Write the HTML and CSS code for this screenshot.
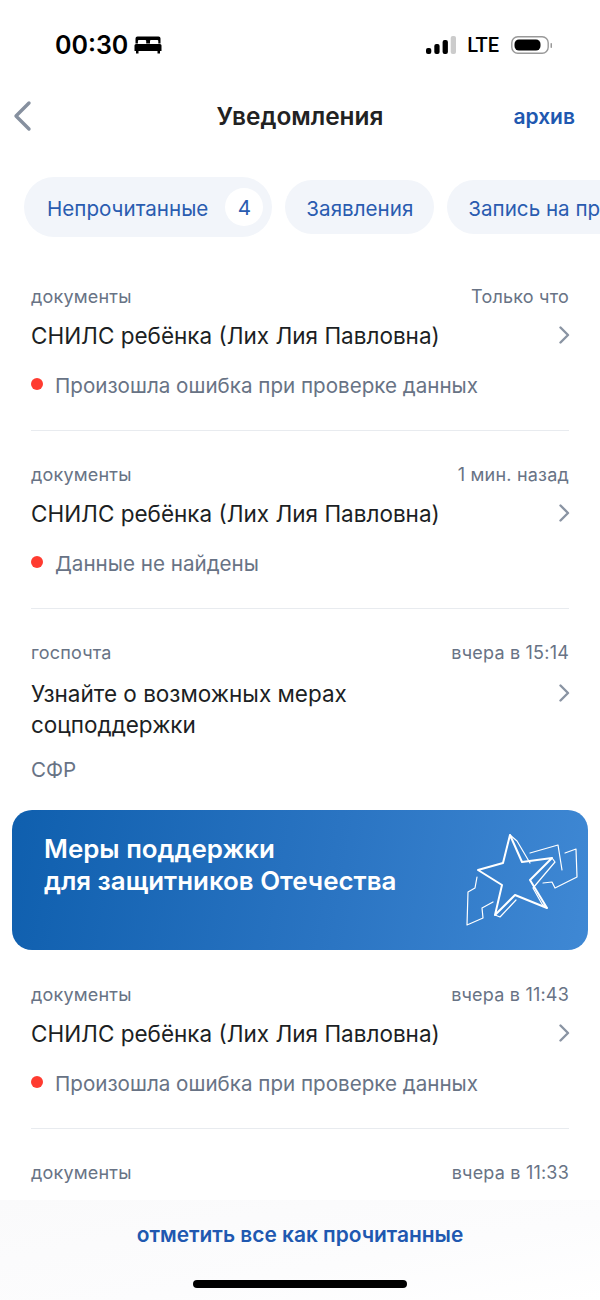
FILE: index.html
```html
<!DOCTYPE html>
<html lang="ru">
<head>
<meta charset="utf-8">
<title>Уведомления</title>
<link rel="stylesheet" href="styles.css">
</head>
<body>
<div class="page">
  <div class="status">
    <div class="status-left">
      <span class="time">00:30</span>
      <svg class="bed" width="28" height="18" viewBox="0 0 28 18"><path d="M3.500 0.500h21a2 2 0 0 1 2 2v5h-2.200v-2.500a1 1 0 0 0-1-1h-6.300a1 1 0 0 0-1 1v2.500h-3.800v-2.500a1 1 0 0 0-1-1h-6.300a1 1 0 0 0-1 1v2.500h-2.400v-5a2 2 0 0 1 2-2z" fill="#000"/><path d="M2 8h24a1.500 1.500 0 0 1 1.500 1.500v5.500h-1.500v2.500h-2.500v-2.500h-19v2.500h-2.500v-2.500h-1.500v-5.500a1.500 1.500 0 0 1 1.500-1.500z" fill="#000"/></svg>
    </div>
    <div class="status-right">
      <svg class="signal" width="30" height="20" viewBox="0 0 30 20"><rect x="0" y="13" width="5.300" height="6" rx="2" fill="#000"/><rect x="8.300" y="9" width="5.300" height="10" rx="2" fill="#000"/><rect x="16.600" y="5" width="5.300" height="14" rx="2" fill="#000"/><rect x="24.700" y="1" width="5.300" height="18" rx="2" fill="#ccc"/></svg>
      <span class="lte">LTE</span>
      <svg class="battery" width="43" height="20" viewBox="0 0 43 20"><rect x="0.800" y="1.800" width="36.400" height="16.400" rx="6" fill="none" stroke="#999" stroke-width="1.400"/><rect x="3.500" y="4.500" width="26" height="11" rx="4.500" fill="#000"/><rect x="39.500" y="8" width="1.500" height="5" rx="0.700" fill="#999"/></svg>
    </div>
  </div>

  <header class="nav">
    <svg class="back" width="20" height="32" viewBox="0 0 20 32"><path d="M16 3 3 16l13 13" fill="none" stroke="#86909f" stroke-width="3.400" stroke-linecap="round" stroke-linejoin="round"/></svg>
    <h1 class="nav-title">Уведомления</h1>
    <a class="nav-link">архив</a>
  </header>

  <div class="chips">
    <div class="chip chip-active">Непрочитанные <span class="count">4</span></div>
    <div class="chip">Заявления</div>
    <div class="chip chip-clip">Запись на приём</div>
  </div>

  <main class="list">
    <section class="item item-line">
      <div class="meta"><span>документы</span><span>Только что</span></div>
      <div class="head">
        <div class="title">СНИЛС ребёнка (Лих Лия Павловна)</div>
        <svg class="chev" width="11" height="18" viewBox="0 0 11 18"><path d="M1.500 1.500 9 9l-7.500 7.500" fill="none" stroke="#8a94a3" stroke-width="2.400" stroke-linecap="round" stroke-linejoin="round"/></svg>
      </div>
      <div class="sub"><i class="dot"></i>Произошла ошибка при проверке данных</div>
    </section>
    <section class="item item-line">
      <div class="meta"><span>документы</span><span>1 мин. назад</span></div>
      <div class="head">
        <div class="title">СНИЛС ребёнка (Лих Лия Павловна)</div>
        <svg class="chev" width="11" height="18" viewBox="0 0 11 18"><path d="M1.500 1.500 9 9l-7.500 7.500" fill="none" stroke="#8a94a3" stroke-width="2.400" stroke-linecap="round" stroke-linejoin="round"/></svg>
      </div>
      <div class="sub"><i class="dot"></i>Данные не найдены</div>
    </section>
    <section class="item item-plain">
      <div class="meta"><span>госпочта</span><span>вчера в 15:14</span></div>
      <div class="head">
        <div class="title">Узнайте о возможных мерах<br>соцподдержки</div>
        <svg class="chev" width="11" height="18" viewBox="0 0 11 18"><path d="M1.500 1.500 9 9l-7.500 7.500" fill="none" stroke="#8a94a3" stroke-width="2.400" stroke-linecap="round" stroke-linejoin="round"/></svg>
      </div>
      <div class="sub">СФР</div>
    </section>

    <div class="banner">
      <div class="banner-text">Меры поддержки<br>для защитников Отечества</div>
      <svg class="star" width="150" height="120" viewBox="0 0 150 120" fill="none" stroke="#fff" stroke-linejoin="round" stroke-linecap="round">
        <path stroke-width="2" d="M70 15 82 42 112 38 90 60 107 88 75 75 55 95 62 65 38 50 63 43z"/>
        <path stroke-width="1.200" d="M70 15 77 21 90 43M112 38 115 42 93 68 102 84 107 88M55 95 60 97 76 80M90 33 118 25 122 50M125 33 136 29 137 57 115 68 112 62 103 63M37 57 35 68 28 72 27 105 43 98 42 88 53 82"/>
      </svg>
    </div>

    <section class="item item-line">
      <div class="meta"><span>документы</span><span>вчера в 11:43</span></div>
      <div class="head">
        <div class="title">СНИЛС ребёнка (Лих Лия Павловна)</div>
        <svg class="chev" width="11" height="18" viewBox="0 0 11 18"><path d="M1.500 1.500 9 9l-7.500 7.500" fill="none" stroke="#8a94a3" stroke-width="2.400" stroke-linecap="round" stroke-linejoin="round"/></svg>
      </div>
      <div class="sub"><i class="dot"></i>Произошла ошибка при проверке данных</div>
    </section>
    <section class="item">
      <div class="meta"><span>документы</span><span>вчера в 11:33</span></div>
    </section>
  </main>

  <footer class="footer">
    <a class="footer-link">отметить все как прочитанные</a>
    <div class="home"></div>
  </footer>
</div>
</body>
</html>
```
FILE: styles.css
```css
* { box-sizing: border-box; }
html, body { margin: 0; padding: 0; background: #fff; }
body { font-family: Inter, "Liberation Sans", sans-serif; }
.page { position: relative; width: 600px; height: 1300px; overflow: hidden; background: #fff; }

.status { height: 90px; padding: 0 46px 0 55px; display: flex; justify-content: space-between; align-items: center; }
.status-left { display: flex; align-items: center; gap: 6px; }
.time { font-size: 25px; font-weight: 600; color: #000; line-height: 32px; }
.status-right { display: flex; align-items: center; gap: 12px; }
.signal { margin-right: -1px; }
.lte { font-size: 20px; font-weight: 500; color: #000; font-family: Roboto, "Liberation Sans", sans-serif; }

.nav { height: 52px; padding: 0 25px 0 13px; display: flex; align-items: center; justify-content: space-between; position: relative; }
.back { display: block; }
.nav-title { margin: 0; position: absolute; left: 0; right: 0; text-align: center; font-size: 24.400px; font-weight: 600; color: #222; line-height: 32px; }
.nav-link { font-size: 21px; font-weight: 600; color: #2058b0; }

.chips { margin-top: 35px; height: 60px; padding-left: 24px; display: flex; align-items: center; gap: 13px; overflow: hidden; white-space: nowrap; }
.chip { flex: none; height: 54px; border-radius: 27px; background: #f2f5fa; padding: 2px 21px 0; display: flex; align-items: center; font-size: 20.600px; color: #2a5cb0; }
.chip-active { height: 60px; border-radius: 30px; padding: 2px 9px 0 23px; gap: 17px; }
.count { width: 38px; height: 38px; margin-top: -2px; border-radius: 50%; background: #fff; display: flex; align-items: center; justify-content: center; }

.list { padding: 48px 0 0; }
.item { margin: 0 31px; }
.item-line { height: 146px; border-bottom: 1px solid #e8ebef; margin-bottom: 32px; }
.item-plain { height: 169px; }
.meta { display: flex; justify-content: space-between; font-size: 18px; letter-spacing: 0.2px; line-height: 24px; color: #687385; height: 24px; }
.head { margin-top: 11px; display: flex; justify-content: space-between; align-items: flex-start; }
.title { font-size: 22.500px; line-height: 31px; color: #1c1f24; }
.chev { margin-top: 6px; flex: none; margin-right: -1px; }
.sub { margin-top: 22px; display: flex; align-items: center; font-size: 20.600px; line-height: 26px; color: #687385; }
.item-plain .head { margin-top: 13px; }
.item-plain .sub { margin-top: 17px; }
.dot { width: 12px; height: 12px; border-radius: 50%; background: #ff3b30; margin-right: 12px; margin-top: -4px; flex: none; }

.banner { margin: 0 12px 33px; height: 140px; border-radius: 20px; background: linear-gradient(100deg, #0f5fae 0%, #2a74c2 55%, #3f88d4 100%); position: relative; }
.banner-text { padding: 23px 0 0 32px; font-size: 25.900px; line-height: 32px; font-weight: 600; color: #fff; }
.star { position: absolute; right: -2px; top: 10px; }

.footer { position: absolute; left: 0; right: 0; bottom: 0; height: 100px; background: linear-gradient(170deg, #fafafb 0%, #fcfcfd 60%, #ffffff 100%); display: flex; flex-direction: column; align-items: center; }
.footer-link { margin-top: 21px; font-size: 20.900px; font-weight: 600; line-height: 28px; color: #2058b0; }
.home { margin-top: 31px; width: 214px; height: 8px; border-radius: 4px; background: #000; }
```
